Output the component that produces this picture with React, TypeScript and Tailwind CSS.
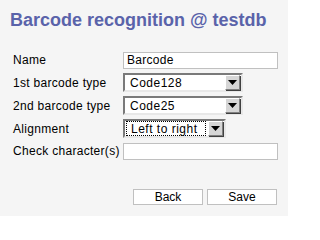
import React from "react";

function Arrow() {
  return (
    <div className="w-[15px] h-[15px] bg-[#d6d6d6] border border-t-white border-l-white border-r-[#808080] border-b-[#808080] flex items-center justify-center shadow-[1px_1px_0_#404040]">
      <svg width="9" height="5" viewBox="0 0 9 5"><path d="M0 0H9L4.5 5Z" fill="#000" /></svg>
    </div>
  );
}

function Select({ value, width, focus }: { value: string; width: string; focus?: boolean }) {
  return (
    <div className={`${width} h-[19px] bg-white border-2 border-t-[#7a7a7a] border-l-[#7a7a7a] border-r-[#e8e8e8] border-b-[#e8e8e8] flex items-center pr-[1px]`}>
      <div className={`flex-1 h-[15px] flex items-center pl-[5px] ${focus ? "outline outline-1 outline-dotted outline-black -outline-offset-1 ml-[1px] mr-[2px] pl-[3px]" : ""}`}>
        <span className="leading-none tracking-[0.5px]">{value}</span>
      </div>
      <Arrow />
    </div>
  );
}

export default function App() {
  return (
    <div className="w-[288px] h-[216px] bg-[#f5f5f5] text-black text-[12px] overflow-hidden" style={{ fontFamily: '"Liberation Sans", Arial, sans-serif' }}>
      <h1 className="text-[#5a63aa] font-bold text-[18px] leading-none pt-[11px] pl-[10px]">Barcode recognition @ testdb</h1>
      <div className="grid grid-cols-[110px_auto] items-center pl-[13px] mt-[22px] gap-y-[4px] tracking-[0.3px]">
        <div>Name</div>
        <div className="w-[155px] h-[17px] bg-white border border-[#c0c0c0] flex items-center pl-[3px]">Barcode</div>
        <div>1st barcode type</div>
        <Select value="Code128" width="w-[120px]" />
        <div>2nd barcode type</div>
        <Select value="Code25" width="w-[120px]" />
        <div>Alignment</div>
        <Select value="Left to right" width="w-[103px]" focus />
        <div>Check character(s)</div>
        <div className="w-[155px] h-[17px] bg-white border border-[#c0c0c0]"></div>
      </div>
      <div className="flex justify-end gap-[4px] pr-[11px] mt-[29px]">
        <button className="w-[70px] h-[16px] bg-white border border-[#c0c0c0] text-[12px] leading-none">Back</button>
        <button className="w-[70px] h-[16px] bg-white border border-[#c0c0c0] text-[12px] leading-none">Save</button>
      </div>
    </div>
  );
}
